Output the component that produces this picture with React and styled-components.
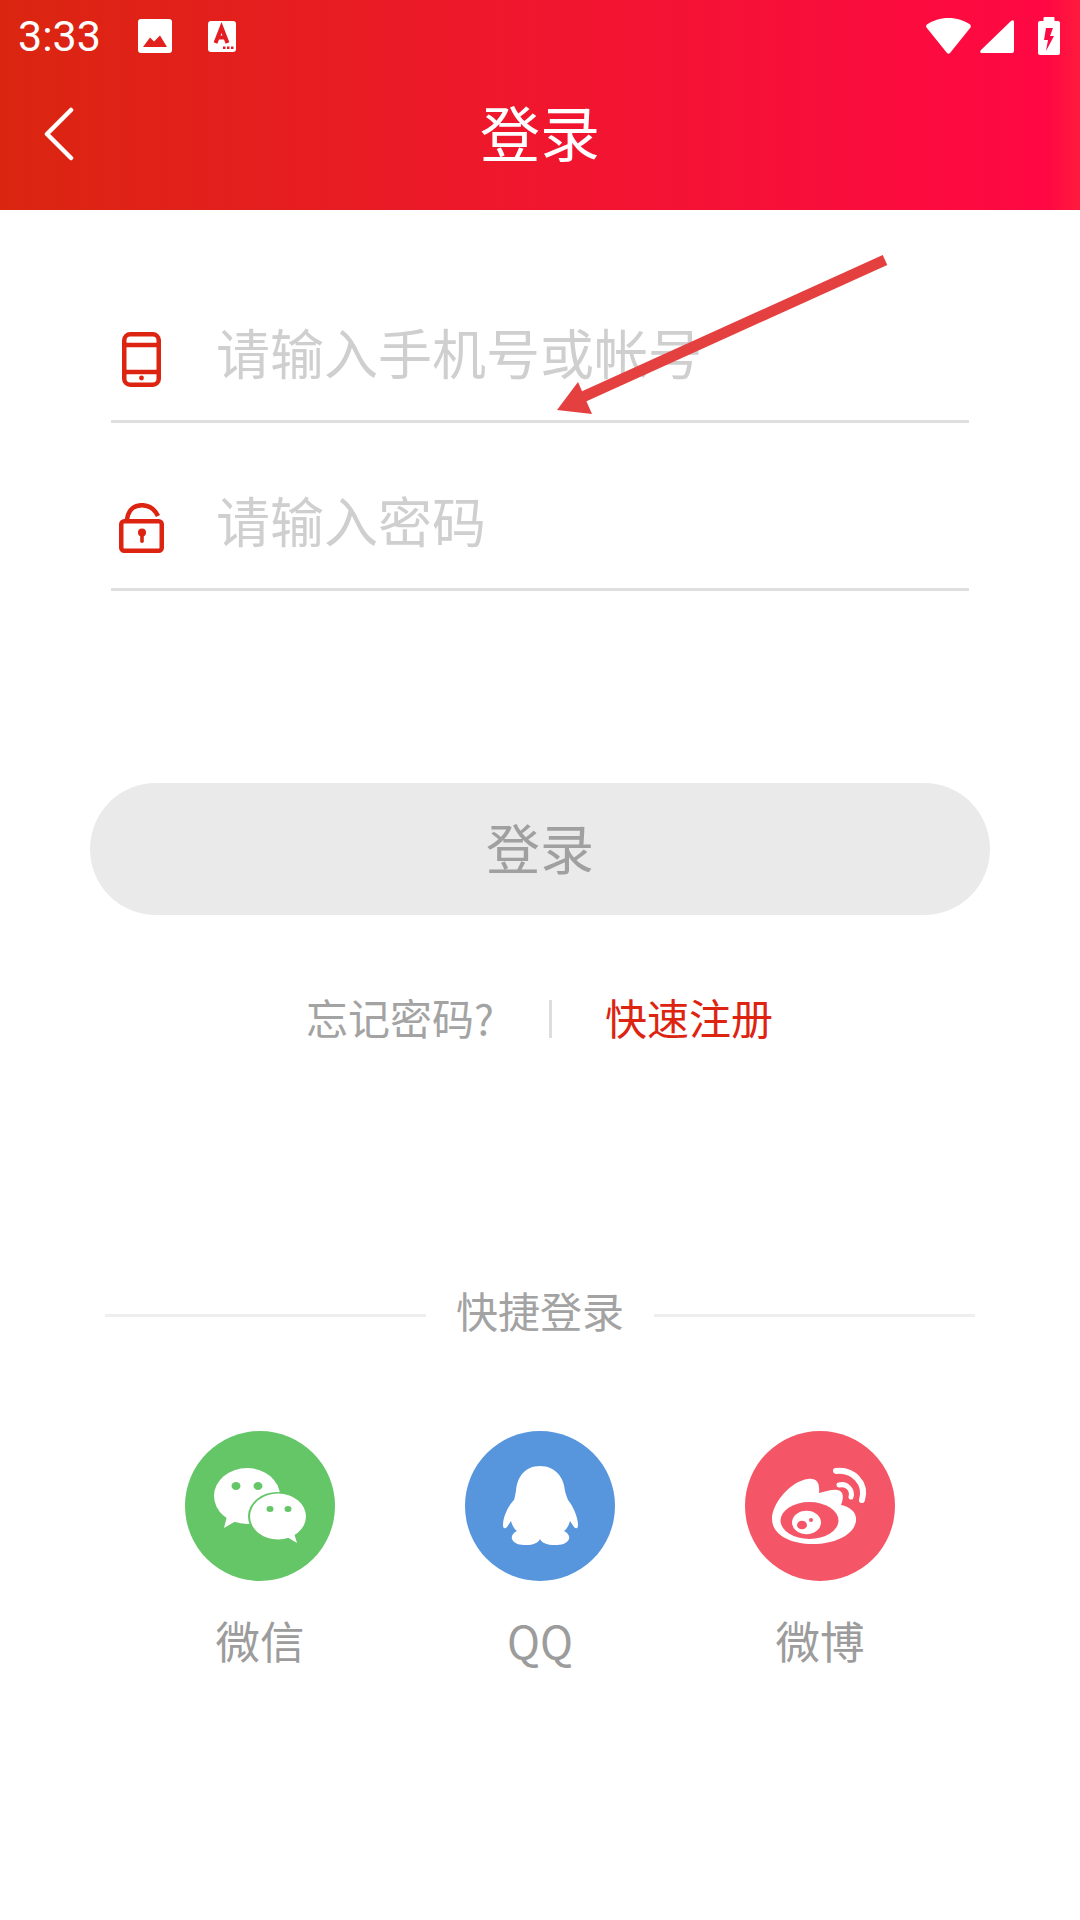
import React from "react";
import styled, { createGlobalStyle } from "styled-components";

const GlobalStyle = createGlobalStyle`
  html, body {
    margin: 0;
    padding: 0;
    background: white;
    font-family: "Noto Sans CJK SC", "Noto Sans", sans-serif;
  }
`;

const Page = styled.div`
  position: relative;
  width: 1080px;
  height: 1920px;
  overflow: hidden;
  background: white;
`;

const Header = styled.header`
  height: 210px;
  background: linear-gradient(90deg, #da2610 0%, #f0162e 50%, #ff0844 97%, #ff1a3c 100%);
  color: white;
`;

const StatusBar = styled.div`
  height: 72px;
  display: flex;
  align-items: center;
  padding: 0 20px 0 18px;
  box-sizing: border-box;
`;

const Time = styled.span`
  font-family: Roboto, sans-serif;
  font-size: 43px;
  font-weight: 400;
  line-height: 72px;
  width: 84px;
  white-space: nowrap;
`;

const StatusLeft = styled.div`
  display: flex;
  align-items: center;
  gap: 36px;
  flex: 1;
`;

const StatusRight = styled.div`
  display: flex;
  align-items: center;
  gap: 8px;
`;

const BatterySlot = styled.span`
  display: flex;
  margin-left: 16px;
`;

const NavBar = styled.div`
  height: 124px;
  display: grid;
  grid-template-columns: 156px 1fr 156px;
  align-items: center;
  padding: 0 44px;
  box-sizing: border-box;
`;

const Title = styled.h1`
  margin: 0;
  padding-bottom: 7px;
  font-size: 60px;
  font-weight: 400;
  line-height: 117px;
  text-align: center;
`;

const Form = styled.div`
  padding: 45px 111px 0;
`;

const Field = styled.div`
  height: 168px;
  box-sizing: border-box;
  border-bottom: 3px solid #dfdfdf;
  display: flex;
  align-items: flex-end;
`;

const FieldIcon = styled.div`
  width: 60px;
  margin: 0 45px ${(p) => p.$lift}px 0;
  display: flex;
  justify-content: center;
`;

const Placeholder = styled.span`
  font-size: 54px;
  line-height: 78px;
  color: #cfcfcf;
  margin-bottom: 29px;
`;

const LoginButton = styled.button`
  display: block;
  width: 900px;
  height: 132px;
  margin: 192px auto 0;
  border: 0;
  border-radius: 66px;
  background: #eaeaea;
  color: #a0a0a0;
  font-family: inherit;
  font-size: 54px;
  line-height: 128px;
  padding: 0 0 4px;
`;

const Links = styled.div`
  margin-top: 85px;
  display: grid;
  grid-template-columns: 549px 3px 1fr;
  align-items: center;
  height: 38px;
`;

const Forgot = styled.span`
  font-size: 42px;
  color: #a3a3a3;
  text-align: right;
  padding: 0 55px 4px 0;
  line-height: 34px;
`;

const Divider = styled.span`
  width: 3px;
  height: 38px;
  background: #dddddd;
`;

const Register = styled.span`
  font-size: 42px;
  color: #dc2410;
  padding: 0 0 4px 53px;
  line-height: 34px;
`;

const QuickTitle = styled.div`
  margin: 247px 105px 0;
  display: flex;
  align-items: center;
  gap: 30px;
  height: 60px;
`;

const QuickLine = styled.span`
  flex: 1;
  height: 3px;
  background: #eeeeee;
`;

const QuickText = styled.span`
  font-size: 42px;
  line-height: 50px;
  padding-bottom: 10px;
  color: #a3a3a3;
`;

const Socials = styled.div`
  margin-top: 86px;
  padding: 0 185px;
  display: flex;
  justify-content: space-between;
`;

const Social = styled.div`
  width: 150px;
  display: flex;
  flex-direction: column;
  align-items: center;
`;

const SocialCircle = styled.div`
  width: 150px;
  height: 150px;
  border-radius: 50%;
  background: ${(p) => p.$color};
`;

const SocialLabel = styled.span`
  margin-top: 29px;
  font-size: 44.5px;
  line-height: 60px;
  color: #9c9c9c;
  white-space: nowrap;
`;

const Arrow = styled.svg`
  position: absolute;
  left: 540px;
  top: 240px;
`;

const ImageIcon = () => (
  <svg width="34" height="34" viewBox="0 0 34 34">
    <rect width="34" height="34" rx="3" fill="white" />
    <path d="M5 28 L12 18.500 L16 22.500 L22 16.500 L29 28 Z" fill="#e2201d" />
  </svg>
);

const FontIcon = () => (
  <svg width="28" height="31" viewBox="0 0 28 31">
    <rect width="28" height="31" rx="3" fill="white" />
    <path d="M7.500 22 L13.500 6.500 L19.500 22 M9.500 16.500 H17.500" fill="none" stroke="#e41d22" strokeWidth="4" />
    <rect x="15" y="25.500" width="2.500" height="2.500" fill="#e41d22" />
    <rect x="19" y="25.500" width="2.500" height="2.500" fill="#e41d22" />
    <rect x="23" y="25.500" width="2.500" height="2.500" fill="#e41d22" />
  </svg>
);

const WifiIcon = () => (
  <svg width="47" height="36" viewBox="0 0 47 36">
    <path
      d="M22 35 L1.500 9.500 Q0.500 8 2 6.500 C8 2.500 15 0 23.500 0 C32 0 39 2.500 45 6.500 Q46.500 8 45.500 9.500 L25 35 Q23.500 36.500 22 35 Z"
      fill="white"
    />
  </svg>
);

const SignalIcon = () => (
  <svg width="34" height="33" viewBox="0 0 34 33">
    <path d="M31 1 Q34 -1 34 2 V31 Q34 33 32 33 H2 Q-1 33 1 30 Z" fill="white" />
  </svg>
);

const BatteryIcon = () => (
  <svg width="22" height="38" viewBox="0 0 22 38">
    <path
      fillRule="evenodd"
      d="M5.500 1 Q5.500 0 6.500 0 H15.500 Q16.500 0 16.500 1 V4 H20 Q22 4 22 6 V36 Q22 38 20 38 H2 Q0 38 0 36 V6 Q0 4 2 4 H5.500 Z M8 11 L6 23 H10 L8 34 L16 19 H12 L15 11 Z"
      fill="white"
    />
  </svg>
);

const BackIcon = () => (
  <svg width="30" height="54" viewBox="0 0 30 54">
    <path d="M27 3 L3 27 L27 51" fill="none" stroke="white" strokeWidth="4.500" strokeLinecap="round" strokeLinejoin="round" />
  </svg>
);

const PhoneIcon = () => (
  <svg width="39" height="55" viewBox="0 0 39 55">
    <rect x="2.250" y="2.250" width="34.500" height="50.500" rx="6" fill="none" stroke="#dc2410" strokeWidth="4.500" />
    <path d="M2 13 H37 M2 40 H37" stroke="#dc2410" strokeWidth="4.500" />
    <circle cx="19.500" cy="46" r="2.400" fill="#dc2410" />
  </svg>
);

const LockIcon = () => (
  <svg width="45" height="50" viewBox="0 0 45 50">
    <rect x="2.250" y="18.250" width="40.500" height="29.500" rx="3" fill="none" stroke="#dc2410" strokeWidth="4.500" />
    <path d="M8 17 C9 7 15 2.200 23 2.200 C31 2.200 36 7 39 13" fill="none" stroke="#dc2410" strokeWidth="4.500" />
    <circle cx="23" cy="29.500" r="4" fill="#dc2410" />
    <rect x="21.200" y="30" width="3.600" height="10" rx="1.800" fill="#dc2410" />
  </svg>
);

const WechatIcon = () => (
  <svg width="150" height="150" viewBox="0 0 150 150">
    <ellipse cx="62" cy="65" rx="33" ry="28" fill="white" />
    <path d="M42 85 L39 97 L51 90 Z" fill="white" />
    <ellipse cx="51" cy="55" rx="4.500" ry="4" fill="#65c667" />
    <ellipse cx="73" cy="55" rx="4.500" ry="4" fill="#65c667" />
    <ellipse cx="92.500" cy="85.500" rx="29.500" ry="24.500" fill="#65c667" />
    <ellipse cx="93" cy="85.500" rx="28" ry="23" fill="white" />
    <path d="M102 106 L112 112 L109 102 Z" fill="white" />
    <ellipse cx="85" cy="78" rx="3.500" ry="3" fill="#65c667" />
    <ellipse cx="103" cy="78" rx="3.500" ry="3" fill="#65c667" />
  </svg>
);

const QqIcon = () => (
  <svg width="150" height="150" viewBox="0 0 150 150">
    <path
      d="M75 35 C60 35 52 46 51 60 C50 64 50 66 49 69 C43 75 38 86 38 94 C38 98 40 98 42 96 L46 90 C47 94 49 98 52 100 C48 102 46 105 47 108 C49 113 55 114 61 114 C68 114 73 112 75 108 C77 112 82 114 90 114 C96 114 102 113 104 108 C105 105 103 102 99 100 C102 98 104 94 105 90 L109 96 C111 98 113 98 113 94 C113 86 108 75 103 69 C102 66 101 64 100 60 C99 46 90 35 75 35 Z"
      fill="white"
    />
  </svg>
);

const WeiboIcon = () => (
  <svg width="150" height="150" viewBox="0 0 150 150">
    <path
      d="M27 88 C27 72 46 50 63 48 C72 47 75 52 74 62 C82 60 94 56 97 62 C99 66 97 71 96 74 C106 76 112 82 111 90 C109 104 90 113 68 113 C44 113 27 103 27 88 Z"
      fill="white"
    />
    <ellipse cx="64.500" cy="89.500" rx="29" ry="18.500" fill="#f45668" />
    <ellipse cx="61.500" cy="91.500" rx="14.500" ry="11.800" fill="white" />
    <ellipse cx="57" cy="94" rx="5" ry="4.300" fill="#f45668" />
    <circle cx="66" cy="89" r="2" fill="#f45668" />
    <path d="M91 40 C108 38 122 52 117 69" fill="none" stroke="white" strokeWidth="6" strokeLinecap="round" />
    <path d="M94 54 C102 52 108 59 106 66" fill="none" stroke="white" strokeWidth="5" strokeLinecap="round" />
  </svg>
);

const socials = [
  { label: "微信", color: "#65c667", icon: <WechatIcon /> },
  { label: "QQ", color: "#5795dd", icon: <QqIcon /> },
  { label: "微博", color: "#f45668", icon: <WeiboIcon /> },
];

const App = () => (
  <Page>
    <GlobalStyle />
    <Header>
      <StatusBar>
        <StatusLeft>
          <Time>3:33</Time>
          <ImageIcon />
          <FontIcon />
        </StatusLeft>
        <StatusRight>
          <WifiIcon />
          <SignalIcon />
          <BatterySlot>
            <BatteryIcon />
          </BatterySlot>
        </StatusRight>
      </StatusBar>
      <NavBar>
        <BackIcon />
        <Title>登录</Title>
      </NavBar>
    </Header>

    <Form>
      <Field>
        <FieldIcon $lift={33}>
          <PhoneIcon />
        </FieldIcon>
        <Placeholder>请输入手机号或帐号</Placeholder>
      </Field>
      <Field>
        <FieldIcon $lift={35}>
          <LockIcon />
        </FieldIcon>
        <Placeholder>请输入密码</Placeholder>
      </Field>
    </Form>

    <LoginButton>登录</LoginButton>

    <Links>
      <Forgot>忘记密码?</Forgot>
      <Divider />
      <Register>快速注册</Register>
    </Links>

    <QuickTitle>
      <QuickLine />
      <QuickText>快捷登录</QuickText>
      <QuickLine />
    </QuickTitle>

    <Socials>
      {socials.map((item) => (
        <Social key={item.label}>
          <SocialCircle $color={item.color}>{item.icon}</SocialCircle>
          <SocialLabel>{item.label}</SocialLabel>
        </Social>
      ))}
    </Socials>

    <Arrow width="360" height="190" viewBox="540 240 360 190">
      <path d="M885 260 L576 400" stroke="#e54040" strokeWidth="11" />
      <path d="M557 410 L578 382 L592 414 Z" fill="#e54040" />
    </Arrow>
  </Page>
);

export default App;
